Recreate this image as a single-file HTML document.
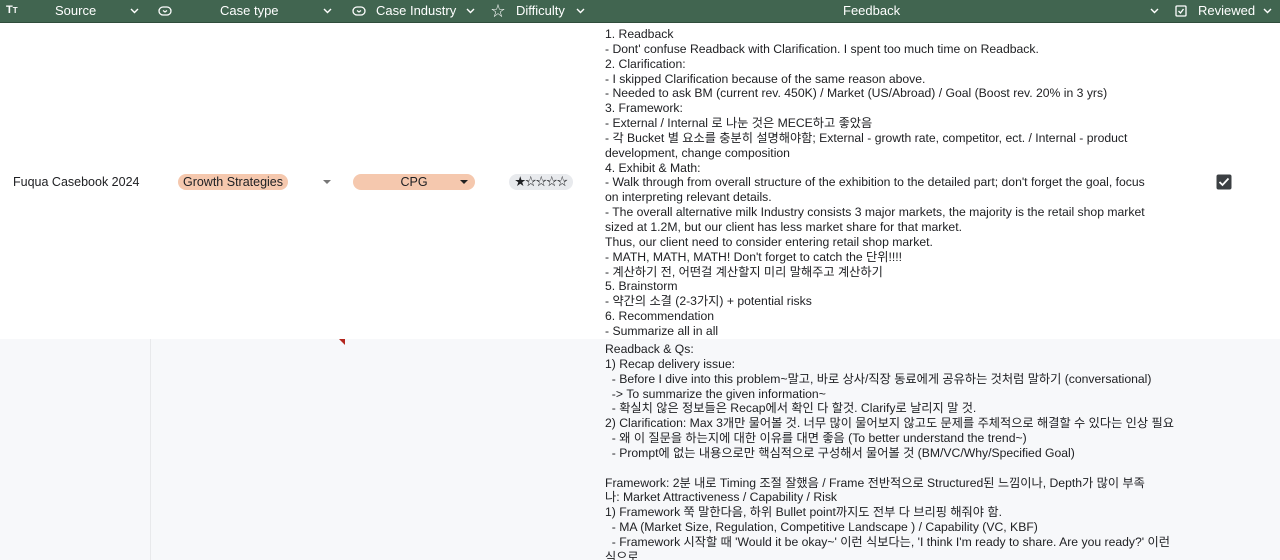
<!DOCTYPE html>
<html style="overflow:hidden;width:1280px;height:560px"><head><meta charset="utf-8">
<style>
*{margin:0;padding:0;box-sizing:border-box}
body{width:1280px;height:560px;overflow:hidden;background:#fff;font-family:"Liberation Sans","Noto Sans CJK KR",sans-serif;font-size:12px;color:#202124;position:relative}
.hdr{position:absolute;left:0;top:0;width:1280px;height:23px;background:#416550;border-bottom:1px solid #2f4c3b;color:#fff;font-size:13px}
.hdr span{position:absolute;top:3px;white-space:nowrap}
.hdr svg{position:absolute;top:5px}
.row2{position:absolute;left:0;top:339px;width:1280px;height:221px;background:#f7f8fa}
.vline{position:absolute;left:150px;top:339px;width:1px;height:221px;background:#e8e9eb}
.tri{position:absolute;left:339px;top:339px;width:0;height:0;border-top:6px solid #b3261e;border-left:6px solid transparent}
.fb{position:absolute;left:605px;width:600px;line-height:14.85px;font-size:12.2px;white-space:pre;overflow:hidden}
.chip{position:absolute;height:16px;border-radius:8px;line-height:16px;font-size:12.5px;text-align:center}
</style></head><body>
<div class="hdr">
<span style="left:6px;font-weight:bold;font-size:11px;top:4px">T<small style="font-size:8px">T</small></span>
<span style="left:55px">Source</span>
<svg style="left:129px" width="11" height="11" viewBox="0 0 11 11"><path d="M2 4l3.5 3.5L9 4" stroke="#fff" stroke-width="1.4" fill="none"/></svg>
<svg style="left:158px;top:6px" width="14" height="10" viewBox="0 0 14 10"><rect x="1" y="1" width="12" height="8" rx="4" stroke="#fff" stroke-width="1.3" fill="none"/><path d="M5 4.5l2 1.5 2-1.5" stroke="#fff" stroke-width="1.2" fill="none"/></svg>
<span style="left:220px">Case type</span>
<svg style="left:322px" width="11" height="11" viewBox="0 0 11 11"><path d="M2 4l3.5 3.5L9 4" stroke="#fff" stroke-width="1.4" fill="none"/></svg>
<svg style="left:352px;top:6px" width="14" height="10" viewBox="0 0 14 10"><rect x="1" y="1" width="12" height="8" rx="4" stroke="#fff" stroke-width="1.3" fill="none"/><path d="M5 4.5l2 1.5 2-1.5" stroke="#fff" stroke-width="1.2" fill="none"/></svg>
<span style="left:376px">Case Industry</span>
<svg style="left:465px" width="11" height="11" viewBox="0 0 11 11"><path d="M2 4l3.5 3.5L9 4" stroke="#fff" stroke-width="1.4" fill="none"/></svg>
<span style="left:491px;top:1px;font-size:14px">☆</span>
<span style="left:516px">Difficulty</span>
<svg style="left:575px" width="11" height="11" viewBox="0 0 11 11"><path d="M2 4l3.5 3.5L9 4" stroke="#fff" stroke-width="1.4" fill="none"/></svg>
<span style="left:843px">Feedback</span>
<svg style="left:1149px" width="11" height="11" viewBox="0 0 11 11"><path d="M2 4l3.5 3.5L9 4" stroke="#fff" stroke-width="1.4" fill="none"/></svg>
<svg style="left:1175px;top:5px" width="12" height="12" viewBox="0 0 12 12"><rect x="1" y="1" width="10" height="10" rx="1" stroke="#fff" stroke-width="1.3" fill="none"/><path d="M3.5 6l2 2 3-4" stroke="#fff" stroke-width="1.3" fill="none"/></svg>
<span style="left:1198px">Reviewed</span>
<svg style="left:1262px" width="11" height="11" viewBox="0 0 11 11"><path d="M2 4l3.5 3.5L9 4" stroke="#fff" stroke-width="1.4" fill="none"/></svg>
</div>

<div style="position:absolute;left:13px;top:175px;font-size:12.5px">Fuqua Casebook 2024</div>
<div class="chip" style="left:178px;top:174px;width:110px;background:#f5c8ae">Growth Strategies</div>
<svg style="position:absolute;left:323px;top:180px" width="8" height="5"><path d="M0 0h8L4 4z" fill="#777"/></svg>
<div class="chip" style="left:353px;top:174px;width:122px;background:#f5c8ae">CPG</div>
<svg style="position:absolute;left:460px;top:180px" width="8" height="5"><path d="M0 0h8L4 4z" fill="#222"/></svg>
<div class="chip" style="left:509px;top:174px;width:64px;background:#e8eaed;font-size:11px;letter-spacing:-0.5px">★☆☆☆☆</div>
<svg style="position:absolute;left:1216px;top:174px" width="16" height="16" viewBox="0 0 16 16"><rect x="0.5" y="0.5" width="15" height="15" rx="2" fill="#3c4043"/><path d="M3.5 8l3 3 6-6.5" stroke="#fff" stroke-width="1.8" fill="none"/></svg>

<div class="fb" style="top:27px">1. Readback
- Dont' confuse Readback with Clarification. I spent too much time on Readback.
2. Clarification:
- I skipped Clarification because of the same reason above.
- Needed to ask BM (current rev. 450K) / Market (US/Abroad) / Goal (Boost rev. 20% in 3 yrs)
3. Framework:
- External / Internal 로 나눈 것은 MECE하고 좋았음
- 각 Bucket 별 요소를 충분히 설명해야함; External - growth rate, competitor, ect. / Internal - product
development, change composition
4. Exhibit &amp; Math:
- Walk through from overall structure of the exhibition to the detailed part; don't forget the goal, focus
on interpreting relevant details.
- The overall alternative milk Industry consists 3 major markets, the majority is the retail shop market
sized at 1.2M, but our client has less market share for that market.
Thus, our client need to consider entering retail shop market.
- MATH, MATH, MATH! Don't forget to catch the 단위!!!!
- 계산하기 전, 어떤걸 계산할지 미리 말해주고 계산하기
5. Brainstorm
- 약간의 소결 (2-3가지) + potential risks
6. Recommendation
- Summarize all in all</div>

<div class="row2"></div>
<div class="vline"></div>
<div class="tri"></div>
<div class="fb" style="top:342px;height:218px">Readback &amp; Qs:
1) Recap delivery issue:
  - Before I dive into this problem~말고, 바로 상사/직장 동료에게 공유하는 것처럼 말하기 (conversational)
  -&gt; To summarize the given information~
  - 확실치 않은 정보들은 Recap에서 확인 다 할것. Clarify로 날리지 말 것.
2) Clarification: Max 3개만 물어볼 것. 너무 많이 물어보지 않고도 문제를 주체적으로 해결할 수 있다는 인상 필요
  - 왜 이 질문을 하는지에 대한 이유를 대면 좋음 (To better understand the trend~)
  - Prompt에 없는 내용으로만 핵심적으로 구성해서 물어볼 것 (BM/VC/Why/Specified Goal)

Framework: 2분 내로 Timing 조절 잘했음 / Frame 전반적으로 Structured된 느낌이나, Depth가 많이 부족
나: Market Attractiveness / Capability / Risk
1) Framework 쭉 말한다음, 하위 Bullet point까지도 전부 다 브리핑 해줘야 함.
  - MA (Market Size, Regulation, Competitive Landscape ) / Capability (VC, KBF)
  - Framework 시작할 때 'Would it be okay~' 이런 식보다는, 'I think I'm ready to share. Are you ready?' 이런
식으로</div>
</body></html>
